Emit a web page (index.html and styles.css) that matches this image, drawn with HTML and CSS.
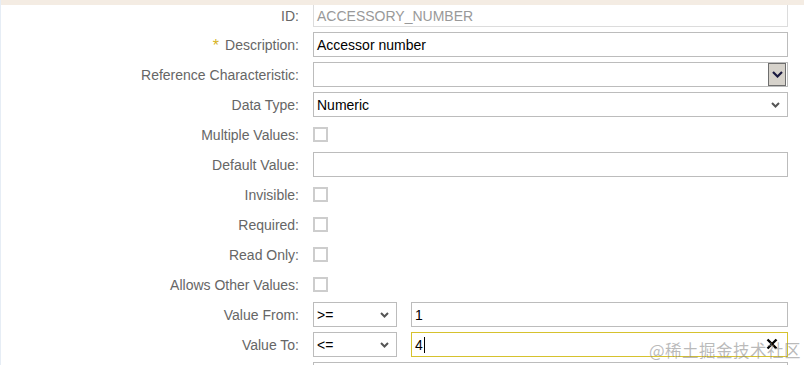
FILE: index.html
```html
<!DOCTYPE html>
<html lang="en">
  <head>
    <meta charset="UTF-8" />
    <title>Characteristic</title>
    <link rel="stylesheet" href="styles.css">
  </head>
  <body>
    <div class="topbar"></div>

    <main class="form">
      <label class="label">ID:</label>
      <div class="field field-id">ACCESSORY_NUMBER</div>

      <label class="label"><span class="star">*</span> Description:</label>
      <div class="field">Accessor number</div>

      <label class="label">Reference Characteristic:</label>
      <div class="field field-select">
        <span></span>
        <span class="drop-btn">
          <svg width="11" height="7" viewBox="0 0 11 7"><path d="M1 1 L5.5 5.5 L10 1" fill="none" stroke="#1a1a40" stroke-width="2.2"/></svg>
        </span>
      </div>

      <label class="label">Data Type:</label>
      <div class="field field-select">
        <span>Numeric</span>
        <svg class="chev" width="9" height="6" viewBox="0 0 9 6"><path d="M1 1 L4.5 4.5 L8 1" fill="none" stroke="#555" stroke-width="2"/></svg>
      </div>

      <label class="label">Multiple Values:</label>
      <div class="check-cell"><span class="checkbox"></span></div>

      <label class="label">Default Value:</label>
      <div class="field"></div>

      <label class="label">Invisible:</label>
      <div class="check-cell"><span class="checkbox"></span></div>

      <label class="label">Required:</label>
      <div class="check-cell"><span class="checkbox"></span></div>

      <label class="label">Read Only:</label>
      <div class="check-cell"><span class="checkbox"></span></div>

      <label class="label">Allows Other Values:</label>
      <div class="check-cell"><span class="checkbox"></span></div>

      <label class="label">Value From:</label>
      <div class="range">
        <div class="field field-select op">
          <span>&gt;=</span>
          <svg class="chev" width="9" height="6" viewBox="0 0 9 6"><path d="M1 1 L4.5 4.5 L8 1" fill="none" stroke="#555" stroke-width="2"/></svg>
        </div>
        <div class="field">1</div>
      </div>

      <label class="label">Value To:</label>
      <div class="range">
        <div class="field field-select op">
          <span>&lt;=</span>
          <svg class="chev" width="9" height="6" viewBox="0 0 9 6"><path d="M1 1 L4.5 4.5 L8 1" fill="none" stroke="#555" stroke-width="2"/></svg>
        </div>
        <div class="field field-active">
          <span>4</span><span class="caret"></span>
          <svg class="clear" width="12" height="12" viewBox="0 0 12 12"><path d="M1.5 1.5 L10.5 10.5 M10.5 1.5 L1.5 10.5" stroke="#000" stroke-width="2.4"/></svg>
        </div>
      </div>

      <label class="label"></label>
      <div class="field"></div>
    </main>

    <div class="watermark">@稀土掘金技术社区</div>
  </body>
</html>
```

FILE: styles.css
```css
/* ------------ Global ------------ */
* {
  margin: 0;
  padding: 0;
  box-sizing: border-box;
}
body {
  font-family: "Liberation Sans", Arial, sans-serif;
  font-size: 14px;
  background: #fff;
  color: #000;
  height: 365px;
  overflow: hidden;
  border-left: 1px solid #e6edf5;
  position: relative;
}
.topbar {
  height: 5px;
  background: #f4ece3;
}

/* ------------ Form grid ------------ */
.form {
  display: grid;
  grid-template-columns: 298px 1fr;
  grid-template-rows: 22px;
  grid-auto-rows: 25px;
  column-gap: 14px;
  row-gap: 5px;
  padding-right: 16px;
}
.label {
  display: flex;
  align-items: center;
  justify-content: flex-end;
  color: #666;
  white-space: nowrap;
}
.star {
  color: #d6b324;
  font-size: 16px;
  margin-right: 6px;
  position: relative;
  top: 1px;
}

.field {
  display: flex;
  align-items: center;
  height: 25px;
  padding: 0 3px;
  border: 1px solid #bcbcbc;
  background: #fff;
  position: relative;
}
.field-id {
  height: 22px;
  border-color: #dcdcdc;
  border-top: none;
  color: #999;
}
.field-select {
  justify-content: space-between;
}
.field-select .chev {
  margin-right: 4px;
}
.drop-btn {
  display: flex;
  align-items: center;
  justify-content: center;
  width: 18px;
  height: 23px;
  margin-right: -2px;
  background: #d6d2cb;
  border: 1px solid #6e6e6e;
}
.range .field-active {
  border-color: #d6c22e;
}
.caret {
  width: 1px;
  height: 16px;
  margin-left: 1px;
  background: #000;
}
.clear {
  position: absolute;
  right: 9px;
  top: 5px;
}

/* ------------ Checkbox ------------ */
.check-cell {
  display: flex;
  align-items: center;
}
.checkbox {
  width: 15px;
  height: 15px;
  border: 2px solid #cdcdcd;
  background: #fff;
}

/* ------------ Range rows ------------ */
.range {
  display: grid;
  grid-template-columns: 84px 1fr;
  column-gap: 14px;
}
.op {
  padding-left: 3px;
}

.watermark {
  position: absolute;
  right: 3px;
  bottom: 3px;
  font-family: "Noto Sans CJK SC", sans-serif;
  font-size: 16.5px;
  color: rgba(140, 140, 140, 0.6);
  letter-spacing: 0.5px;
}
```
